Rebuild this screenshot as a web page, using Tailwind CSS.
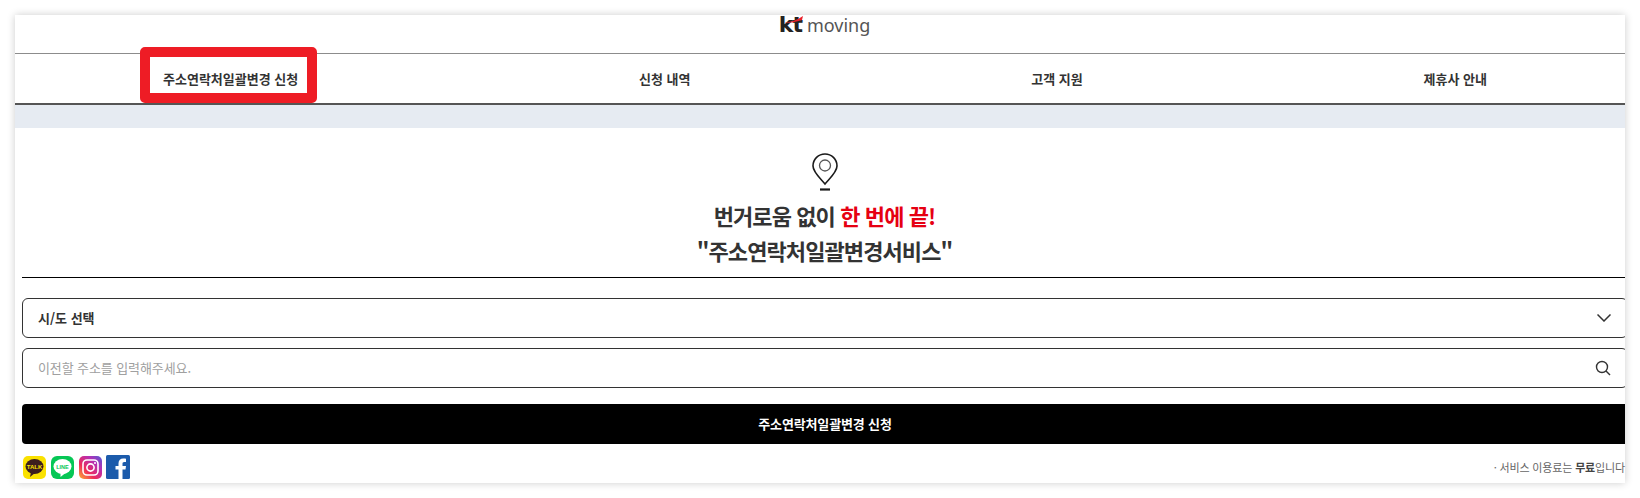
<!DOCTYPE html>
<html lang="ko">
<head>
    <meta charset="UTF-8">
    <title>kt moving</title>
    <script src="https://cdn.jsdelivr.net/npm/@tailwindcss/browser@4"></script>
</head>
<body class="bg-white h-[498px] overflow-hidden font-['Noto_Sans_CJK_KR','Noto_Sans',sans-serif] text-[#333]">
    <div class="pt-[15px] pl-[15px] pr-[15px]">
        <div class="relative w-[1610px] h-[468px] bg-white shadow-[0_0_8px_rgba(0,0,0,0.2)]">
            <!-- Logo -->
            <div class="h-[38px] flex justify-center items-start pl-[9px]">
                <div class="flex items-end h-[20px]">
                    <span class="relative font-['DejaVu_Sans',sans-serif] font-bold text-[22px] leading-[20px] tracking-[-1px] text-[#222]">kt
                        <svg class="absolute left-[4px] top-[1px]" width="21" height="8" viewBox="0 0 21 8"><path d="M1 7C8 6 14 4 20 0L19 4C13 6 8 7 1 7Z" fill="#e8202a"/></svg>
                    </span>
                    <span class="ml-[5px] font-['Noto_Sans',sans-serif] text-[18px] leading-[20px] text-[#555]">moving</span>
                </div>
            </div>
            <!-- Nav -->
            <nav class="h-[52px] border-t border-[#8c8c8c] border-b-2 border-b-[#555] flex items-center justify-between pl-[148px] pr-[138px] text-[13px] font-bold text-[#333]">
                <a>주소연락처일괄변경 신청</a>
                <a>신청 내역</a>
                <a>고객 지원</a>
                <a>제휴사 안내</a>
            </nav>
            <div class="h-[23px] bg-[#e6ebf2]"></div>

            <!-- Highlight box over the first nav item -->
            <div class="absolute left-[125px] top-[32px] w-[177px] h-[56px] border-[10px] border-[#ee1c25] rounded-[5px]"></div>

            <!-- Title -->
            <div class="flex flex-col items-center pt-[25px] pl-[9px]">
                <svg width="26" height="38" viewBox="0 0 26 38" fill="none" stroke="#1a1a1a">
                    <path d="M13 31C8 25 1 19 1 13C1 6 6.500 1 13 1C19.500 1 25 6 25 13C25 19 18 25 13 31Z" stroke-width="1.600"/>
                    <circle cx="13" cy="12.500" r="5.500" stroke="#555" stroke-width="1.300"/>
                    <path d="M8 36.500H18" stroke-width="2.200"/>
                </svg>
                <h2 class="mt-[7px] text-[22px] leading-[35px] font-bold text-center tracking-[-0.9px] text-[#333]">번거로움 없이 <span class="text-[#e60012]">한 번에 끝!</span><br>"주소연락처일괄변경서비스"</h2>
            </div>
            <div class="mt-[9px] ml-[7px] border-t border-black"></div>

            <!-- Form, runs slightly past the card's right edge -->
            <div class="ml-[7px] mt-[20px] overflow-x-clip">
                <div class="w-[1606px]">
                    <div class="h-[40px] border border-[#333] rounded-[6px] flex items-center justify-between pl-[15px] pr-[16px] text-[13px] font-bold text-[#333]">
                        <span>시/도 선택</span>
                        <svg width="14" height="8" viewBox="0 0 14 8" fill="none" stroke="#333" stroke-width="1.500"><path d="M0.500 0.500L7 7L13.500 0.500"/></svg>
                    </div>
                    <div class="mt-[10px] h-[40px] border border-[#333] rounded-[6px] flex items-center justify-between pl-[15px] pr-[16px] text-[13px] tracking-[-0.1px] text-[#a0a0a0]">
                        <span>이전할 주소를 입력해주세요.</span>
                        <svg width="16" height="16" viewBox="0 0 16 16" fill="none" stroke="#333" stroke-width="1.400"><circle cx="7" cy="7" r="5.500"/><path d="M11 11L15 15"/></svg>
                    </div>
                    <button class="mt-[16px] w-full h-[40px] bg-black text-white text-[13px] font-bold tracking-[-0.15px] rounded-[4px]">주소연락처일괄변경 신청</button>
                </div>
            </div>

            <!-- Footer -->
            <div class="mt-[12px] ml-[8px] flex items-center justify-between">
                <div class="flex items-center gap-[5px]">
                    <svg width="23" height="23" viewBox="0 0 23 23"><rect width="23" height="23" rx="5" fill="#fae100"/><ellipse cx="11.500" cy="10.500" rx="9" ry="7.500" fill="#3c1e1e"/><path d="M8 16L7 21L12 17Z" fill="#3c1e1e"/><text x="11.500" y="12.500" text-anchor="middle" font-family="Liberation Sans" font-size="6" font-weight="700" fill="#fae100">TALK</text></svg>
                    <svg width="23" height="23" viewBox="0 0 23 23"><rect width="23" height="23" rx="6" fill="#06c755"/><ellipse cx="11.500" cy="10.500" rx="9" ry="7.500" fill="#fff"/><path d="M9.500 17L9.500 21L14.500 17Z" fill="#fff"/><text x="11.500" y="12.500" text-anchor="middle" font-family="Liberation Sans" font-size="5.500" font-weight="700" fill="#06c755">LINE</text></svg>
                    <svg width="23" height="23" viewBox="0 0 23 23">
                        <defs><linearGradient id="ig" x1="0" y1="1" x2="1" y2="0"><stop offset="0" stop-color="#fdb431"/><stop offset="0.350" stop-color="#ee2a5b"/><stop offset="0.700" stop-color="#b42fb4"/><stop offset="1" stop-color="#4f5bd5"/></linearGradient></defs>
                        <rect width="23" height="23" rx="5" fill="url(#ig)"/><rect x="4" y="4" width="15" height="15" rx="4" fill="none" stroke="#fff" stroke-width="1.600"/><circle cx="11.500" cy="11.500" r="3.600" fill="none" stroke="#fff" stroke-width="1.600"/><circle cx="16" cy="7" r="1" fill="#fff"/>
                    </svg>
                    <svg width="24" height="24" viewBox="0 0 24 24" class="mt-[-1px] ml-[-1px]"><rect width="24" height="24" rx="1.500" fill="#1c5bab"/><path d="M16.500 24V14.500H19.500L20 11H16.500V8.800C16.500 7.700 16.900 7 18.300 7H20V3.800C19.500 3.700 18.500 3.600 17.200 3.600C14.500 3.600 12.500 5.300 12.500 8.300V11H9.500V14.500H12.500V24Z" fill="#fff"/></svg>
                </div>
                <p class="text-[11px] tracking-[-0.15px] text-[#666] whitespace-nowrap">· 서비스 이용료는 <b class="font-bold text-[#444]">무료</b>입니다</p>
            </div>
        </div>
    </div>
</body>
</html>
